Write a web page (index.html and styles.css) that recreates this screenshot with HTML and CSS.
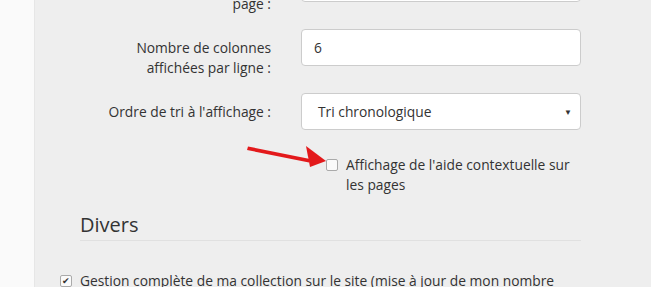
FILE: index.html
```html
<!DOCTYPE html>
<html lang="fr">

<head>
    <meta charset="UTF-8">
    <title>Préférences</title>
    <link rel="stylesheet" href="styles.css">
</head>

<body>
    <div class="page">
        <div class="side"></div>
        <main class="panel">
            <form class="prefs">
                <div class="row">
                    <label class="lbl">Nombre d'éléments affichés par<br>page :</label>
                    <input class="field" type="text" value="20">
                </div>
                <div class="row">
                    <label class="lbl">Nombre de colonnes<br>affichées par ligne :</label>
                    <input class="field" type="text" value="6">
                </div>
                <div class="row">
                    <label class="lbl">Ordre de tri à l'affichage :</label>
                    <div class="select">
                        <span>Tri chronologique</span>
                        <span class="caret">&#9660;</span>
                    </div>
                </div>
                <div class="row">
                    <span></span>
                    <label class="check">
                        <span class="box"></span>
                        <span>Affichage de l'aide contextuelle sur les pages</span>
                    </label>
                </div>

                <svg class="arrow" width="90" height="30" viewBox="0 0 90 30">
                    <path d="M2 2.5 L64 15 L63 18.5 L1 6 Z" fill="#e3191b" />
                    <path d="M60 2 L80 17 L64 23 Z" fill="#e3191b" />
                </svg>
            </form>

            <h2 class="legend">Divers</h2>

            <label class="check wide">
                <span class="box on">&#10004;</span>
                <span>Gestion complète de ma collection sur le site (mise à jour de mon nombre d'exemplaires)</span>
            </label>
        </main>
    </div>
</body>

</html>
```

FILE: styles.css
```css
body {
    margin: 0;
    background: #fff;
    font-family: "Open Sans", "Noto Sans", sans-serif;
    font-size: 13.8px;
    line-height: 20px;
    color: #333;
    overflow: hidden;
}

.page {
    display: flex;
    height: 287px;
}

.side {
    width: 34px;
    border-right: 1px solid #e6e6e6;
    background: #fafafa;
}

.panel {
    flex: 1;
    background: #eee;
}

.prefs {
    position: relative;
    display: flex;
    flex-direction: column;
    gap: 15px;
    margin-top: -35px;
}

.row {
    display: grid;
    grid-template-columns: 236px 280px;
    column-gap: 30px;
    align-items: start;
}

.lbl {
    text-align: right;
    padding-top: 9px;
}

.field,
.select {
    box-sizing: border-box;
    height: 37px;
    border: 1px solid #ccc;
    border-radius: 4px;
    background: #fff;
    font: inherit;
    color: #333;
    padding: 0 12px;
}

.select {
    display: flex;
    align-items: center;
    justify-content: space-between;
    padding: 0 8px 0 16px;
}

.caret {
    font-size: 8px;
    color: #333;
}

.check {
    display: flex;
    gap: 8px;
    align-items: flex-start;
}

.prefs .check {
    padding-left: 25px;
    margin-top: 10px;
}

.box {
    box-sizing: border-box;
    flex: none;
    width: 12px;
    height: 12px;
    margin-top: 4px;
    border: 1px solid #aaa;
    border-radius: 2px;
    background: #fafafa;
    font-size: 9px;
    line-height: 10px;
    text-align: center;
    color: #333;
}

.arrow {
    position: absolute;
    left: 211px;
    top: 179px;
}

.legend {
    margin: 17px 0 0 45px;
    width: 501px;
    padding-bottom: 2px;
    border-bottom: 1px solid #e0e0e0;
    font-size: 20px;
    font-weight: 400;
    line-height: 26px;
}

.wide {
    margin: 30px 0 0 25px;
    width: 540px;
}
```
